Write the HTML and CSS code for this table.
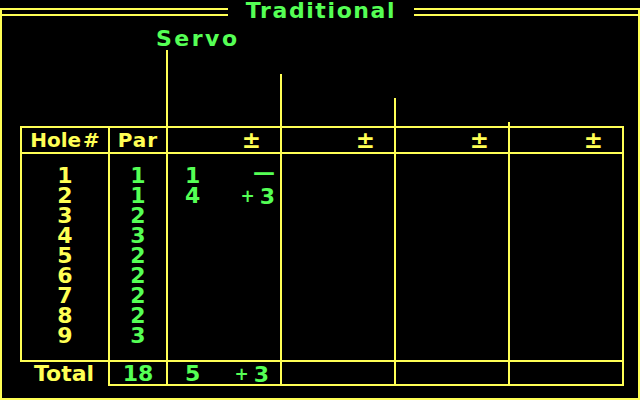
FILE: index.html
```html
<!DOCTYPE html>
<html lang="en">
<head>
<meta charset="utf-8">
<title>Traditional</title>
<link rel="stylesheet" href="styles.css">
</head>
<body>
<div class="screen">
  <div class="titlebar">
    <div class="dbl dbl-left"></div>
    <div class="title">Traditional</div>
    <div class="dbl dbl-right"></div>
  </div>
  <div class="frame">
    <div class="names">
      <div class="nh"></div>
      <div class="nh"></div>
      <div class="ph p1"><div class="pname">Servo</div><div class="stem"></div></div>
      <div class="ph p2"><div class="pname"></div><div class="stem"></div></div>
      <div class="ph p3"><div class="pname"></div><div class="stem"></div></div>
      <div class="ph p4"><div class="pname"></div><div class="stem"></div></div>
    </div>
    <div class="card">
      <div class="hd c-hole">Hole<span class="hash">#</span></div>
      <div class="hd c-par">Par</div>
      <div class="hd c-pl"><span class="pm">±</span></div>
      <div class="hd c-pl"><span class="pm">±</span></div>
      <div class="hd c-pl"><span class="pm">±</span></div>
      <div class="hd c-pl last"><span class="pm">±</span></div>

      <div class="bd c-hole">
        <div>1</div><div>2</div><div>3</div><div>4</div><div>5</div><div>6</div><div>7</div><div>8</div><div>9</div>
      </div>
      <div class="bd c-par">
        <div>1</div><div>1</div><div>2</div><div>3</div><div>2</div><div>2</div><div>2</div><div>2</div><div>3</div>
      </div>
      <div class="bd c-pl">
        <div class="srow"><span>1</span><span class="even">—</span></div>
        <div class="srow"><span>4</span><span class="delta"><span class="sign">+</span>3</span></div>
      </div>
      <div class="bd c-pl"></div>
      <div class="bd c-pl"></div>
      <div class="bd c-pl last"></div>

      <div class="tot-label">Total</div>
      <div class="tot c-par">18</div>
      <div class="tot c-pl"><div class="srow trow"><span>5</span><span class="delta"><span class="sign">+</span>3</span></div></div>
      <div class="tot c-pl"></div>
      <div class="tot c-pl"></div>
      <div class="tot c-pl last"></div>
    </div>
  </div>
</div>
</body>
</html>
```

FILE: styles.css
```css
* { box-sizing: border-box; }

body {
  margin: 0;
  background: #000;
}

.screen {
  width: 640px;
  height: 400px;
  background: #000;
  overflow: hidden;
  font-family: "DejaVu Sans", "Verdana", sans-serif;
  font-weight: bold;
  color: #55ff55;
}

/* title bar with double rule */
.titlebar {
  display: flex;
  align-items: flex-start;
  height: 22px;
  margin-bottom: -6px;
}

.dbl {
  height: 8px;
  margin-top: 8px;
  border-top: 2px solid #ffff55;
  border-bottom: 2px solid #ffff55;
}

.dbl-left {
  flex: 0 0 228px;
  border-left: 2px solid #ffff55;
}

.dbl-right {
  flex: 1 1 auto;
  border-right: 2px solid #ffff55;
}

.title {
  flex: 0 0 186px;
  text-align: center;
  font-size: 22px;
  line-height: 21px;
  letter-spacing: 1.6px;
  color: #55ff55;
  white-space: nowrap;
}

/* outer frame */
.frame {
  height: 384px;
  border: 2px solid #ffff55;
  border-top: none;
  padding-left: 18px;
}

/* staggered player names */
.names {
  display: grid;
  grid-template-columns: 88px 58px 114px 114px 114px 116px;
  height: 110px;
}

.ph {
  display: flex;
  flex-direction: column;
}

.p1 { margin-top: 12px; }
.p2 { margin-top: 36px; }
.p3 { margin-top: 60px; }
.p4 { margin-top: 84px; }

.pname {
  height: 22px;
  margin-left: -10px;
  font-size: 22px;
  line-height: 22px;
  letter-spacing: 2.5px;
  color: #55ff55;
  white-space: nowrap;
}

.stem {
  flex: 1 1 auto;
  border-left: 2px solid #ffff55;
}

/* score card grid */
.card {
  display: grid;
  grid-template-columns: 88px 58px 114px 114px 114px 116px;
  grid-template-rows: 28px 208px 24px;
}

.hd {
  border-top: 2px solid #ffff55;
  border-bottom: 2px solid #ffff55;
  border-left: 2px solid #ffff55;
  font-size: 20px;
  line-height: 24px;
  color: #ffff55;
  white-space: nowrap;
}

.hd.c-hole, .hd.c-par { text-align: center; }
.hd.c-par { letter-spacing: 1px; }

.hash { margin-left: 2px; }

.hd.c-pl {
  text-align: right;
  padding-right: 19px;
}

.pm {
  font-size: 23px;
  line-height: 24px;
}

.last { border-right: 2px solid #ffff55; }

.bd {
  border-left: 2px solid #ffff55;
  border-bottom: 2px solid #ffff55;
  padding-top: 12px;
  font-size: 22px;
  line-height: 20px;
}

.bd.c-hole { color: #ffff55; text-align: center; }
.bd.c-par { color: #55ff55; text-align: center; }

.srow {
  display: flex;
  justify-content: space-between;
  align-items: flex-start;
  padding: 0 5px 0 17px;
  color: #55ff55;
}

.even { margin-top: -3px; }

.sign {
  font-size: 17px;
  margin-right: 5px;
  vertical-align: 2px;
}

.tot-label {
  padding-top: 1px;
  font-size: 22px;
  line-height: 22px;
  text-align: center;
  color: #ffff55;
}

.tot {
  border-left: 2px solid #ffff55;
  border-bottom: 2px solid #ffff55;
  padding-top: 1px;
  font-size: 22px;
  line-height: 22px;
  color: #55ff55;
}

.tot.c-par { text-align: center; }

.trow { padding-right: 11px; }
```
